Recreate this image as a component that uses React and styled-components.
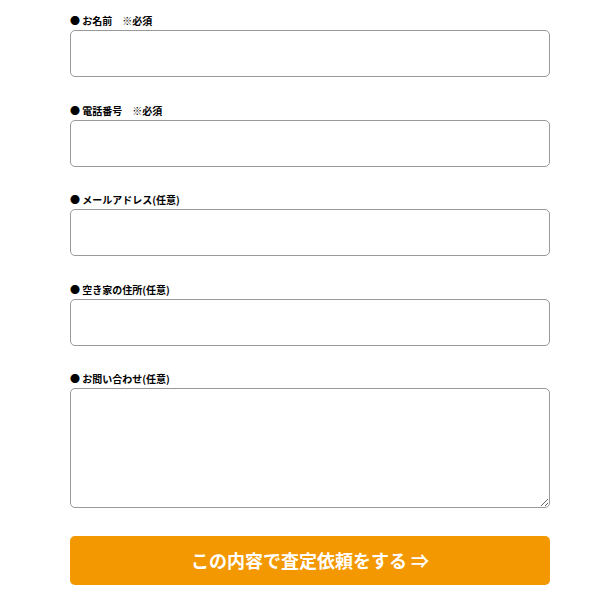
import React from 'react';
import styled, { createGlobalStyle } from 'styled-components';

const Global = createGlobalStyle`
  body {
    margin: 0;
    background: #fff;
    font-family: "Noto Sans CJK JP", "Noto Sans", sans-serif;
  }
`;

const Form = styled.form`
  width: 480px;
  margin: 0 0 0 70px;
  padding-top: 14px;
  display: flex;
  flex-direction: column;
`;

const Field = styled.div`
  display: flex;
  flex-direction: column;
  margin-bottom: 26.5px;
`;

const Label = styled.label`
  font-size: 10px;
  font-weight: 700;
  line-height: 14px;
  color: #000;
  margin-bottom: 2px;
  white-space: pre;
`;

const Input = styled.input`
  box-sizing: border-box;
  width: 100%;
  height: 47px;
  border: 1px solid #999;
  border-radius: 5px;
  padding: 0 10px;
  font-size: 14px;
  background: #fff;
`;

const TextArea = styled.textarea`
  box-sizing: border-box;
  width: 100%;
  height: 120px;
  border: 1px solid #999;
  border-radius: 5px;
  padding: 8px 10px;
  font-size: 14px;
  display: block;
  font-family: inherit;
`;

const Submit = styled.button`
  margin-top: 1px;
  height: 49px;
  width: 100%;
  border: none;
  border-radius: 5px;
  background: #f39800;
  color: #fff;
  font-family: "Noto Sans CJK JP", "Noto Sans", sans-serif;
  font-size: 18px;
  font-weight: 700;
  cursor: pointer;
`;

const fields = [
  { label: '● お名前　※必須', type: 'text' },
  { label: '● 電話番号　※必須', type: 'tel' },
  { label: '● メールアドレス(任意)', type: 'email' },
  { label: '● 空き家の住所(任意)', type: 'text' },
];

export default function App() {
  return (
    <>
      <Global />
      <Form onSubmit={(e) => e.preventDefault()}>
        {fields.map((f) => (
          <Field key={f.label}>
            <Label>{f.label}</Label>
            <Input type={f.type} />
          </Field>
        ))}
        <Field>
          <Label>● お問い合わせ(任意)</Label>
          <TextArea />
        </Field>
        <Submit type="submit">この内容で査定依頼をする ⇒</Submit>
      </Form>
    </>
  );
}
